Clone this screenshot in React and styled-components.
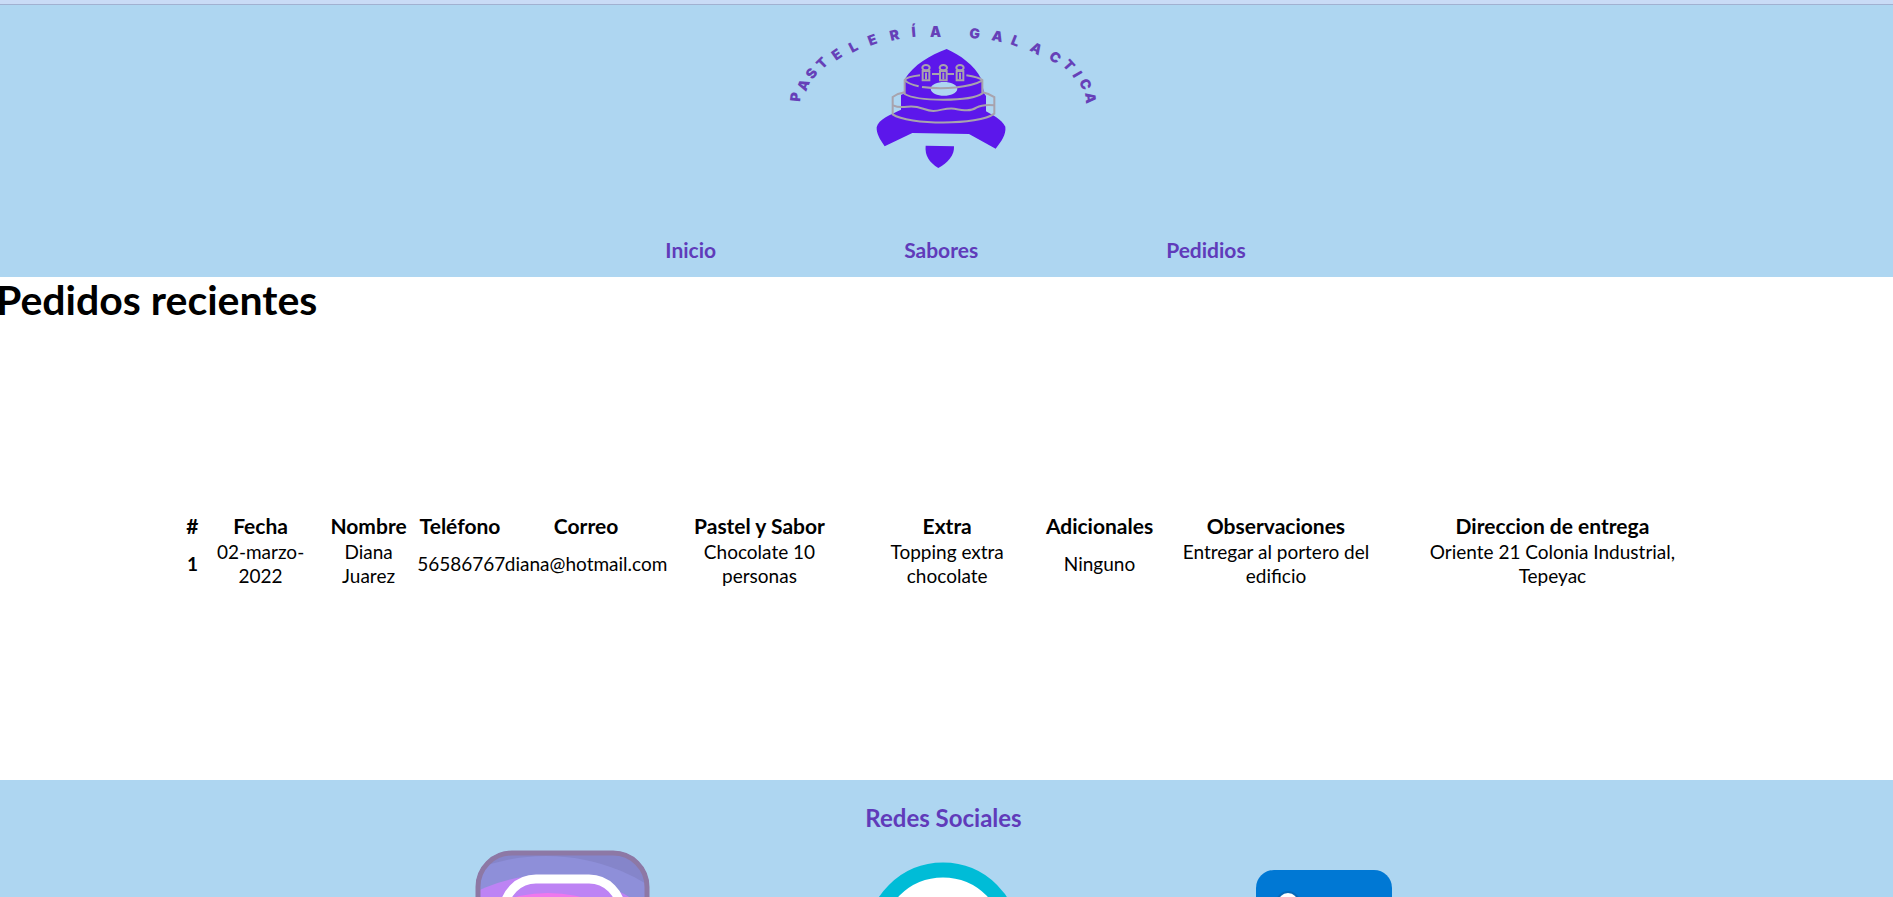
import React from "react";
import styled, { createGlobalStyle } from "styled-components";

const sky = "#aed6f1";
const violet = "#603bba";

const GlobalStyle = createGlobalStyle`
  body {
    margin: 0;
    background: #fff;
    color: #000;
    font-family: "Gill Sans MT", Lato, "Liberation Sans", sans-serif;
    font-size: 19px;
    line-height: 24px;
    overflow-x: hidden;
  }
`;

const TopStrip = styled.div`
  height: 4px;
  background: #c9dbf6;
  border-bottom: 1px solid #a1b1d1;
`;

const Header = styled.header`
  display: flex;
  flex-direction: column;
  align-items: center;
  background: ${sky};
`;

const LogoDrawing = styled.svg`
  display: block;
  width: 350px;
  height: 176px;
  margin-right: 4px;
`;

const ArchText = styled.text`
  fill: #6640b8;
  font: 900 14px Inter, "DejaVu Sans", sans-serif;
`;

const Nav = styled.nav`
  display: flex;
  justify-content: center;
  gap: 188px;
  padding: 57px 0 15px 18px;
`;

const NavLink = styled.a`
  color: ${violet};
  font-size: 21px;
  font-weight: 700;
  text-decoration: none;
`;

const PageTitle = styled.h1`
  margin: 0 0 0 -4px;
  font-size: 41px;
  line-height: 46px;
  font-weight: 700;
`;

const Main = styled.main`
  padding-bottom: 192px;
`;

const Orders = styled.table`
  width: 80.6%;
  margin: 191px auto 0;
  table-layout: fixed;
  border-spacing: 2px 0;
  text-align: center;
`;

const Column = styled.col`
  width: ${(p) => p.$share}%;
`;

const Cell = styled.td`
  padding: 0;
  white-space: pre-line;
`;

const HeadCell = styled.th`
  padding: 0 0 2px;
  font-size: 21px;
  white-space: nowrap;
`;

const RowNumber = styled.th`
  padding: 0;
`;

const Footer = styled.footer`
  background: ${sky};
  padding: 24px 0 32px;
`;

const FooterTitle = styled.h2`
  margin: 0 0 10px;
  padding-right: 6px;
  color: ${violet};
  font-size: 24px;
  line-height: 28px;
  text-align: center;
`;

const SocialRow = styled.div`
  display: flex;
  justify-content: center;
  gap: 189px;
  padding-right: 8px;
`;

const SocialLink = styled.a`
  display: block;
  width: 192px;
  height: 192px;
`;

const letters = [
  ["P", 26, 97, -84], ["A", 33, 85, -68], ["S", 42, 73, -56], ["T", 52, 63, -44],
  ["E", 67, 54, -35], ["L", 84, 46, -27], ["E", 103, 40, -20], ["R", 125, 35, -13],
  ["Í", 144, 32, -5], ["A", 165, 32, 0], ["G", 204, 33, 5], ["A", 227, 36, 12],
  ["L", 247, 41, 22], ["A", 266, 48, 30], ["C", 285, 57, 38], ["T", 299, 65, 48],
  ["I", 307, 74, 60], ["C", 315, 84, 70], ["A", 320, 97, 84],
];

// Each glyph turns about its own origin, so step back from its centre.
const placed = letters.map(([ch, x, y, deg]) => {
  const a = (deg * Math.PI) / 180;
  const half = ch === "I" || ch === "Í" ? 2 : 5;
  return {
    ch,
    deg,
    x: Math.round(x - half * Math.cos(a) - 5 * Math.sin(a)),
    y: Math.round(y - half * Math.sin(a) + 5 * Math.cos(a)),
  };
});

function Logo() {
  return (
    <LogoDrawing viewBox="0 5 350 176" role="img" aria-label="Pastelería Galáctica">
      <ArchText
        x={placed.map((p) => p.x).join(" ")}
        y={placed.map((p) => p.y).join(" ")}
        rotate={placed.map((p) => p.deg).join(" ")}
      >
        {placed.map((p) => p.ch).join("")}
      </ArchText>
      <g transform="scale(0.33333)">
        <path
          fill="#5c17eb"
          fillRule="evenodd"
          d="M530 147C570 165 612 194 634 237L642 280L648 288V334C668 346 694 357 706 380C709 404 694 424 677 446L597 402L427 399L344 439C329 417 319 401 320 382C325 357 363 344 393 329V285L404 280V238C432 193 480 166 530 147ZM482 266C484 294 560 294 562 266C560 239 484 239 482 266Z"
        />
        <path fill="#5c17eb" d="M467 437L552 439C554 466 533 489 505 504C478 487 464 467 467 437Z" />
        <g fill="none" stroke="#a8a3ad" strokeWidth="6">
          <path d="M450 226C426 229 409 233 404 240V282C440 304 600 306 637 280V240C626 232 608 229 589 226M486 222H510M530 222H552" />
          <path d="M405 241C416 252 428 255 446 259M456 261C520 269 600 263 638 241" />
          <path d="M404 277L384 282L368 291V343C415 375 625 377 673 341V291L655 282L638 277" />
          <path d="M369 316C386 324 398 322 413 320C450 315 462 333 490 333C516 331 528 323 553 326C580 331 603 335 619 323C634 315 655 314 673 316" />
          {[468, 520, 570].map((x) => (
            <g key={x}>
              <ellipse cx={x} cy="203" rx="11" ry="8" />
              <path d={`M${x - 10} 213H${x + 10}V241H${x - 10}Z`} />
              <path d={`M${x} 218V238`} />
            </g>
          ))}
        </g>
      </g>
    </LogoDrawing>
  );
}

function Instagram() {
  return (
    <svg width="192" height="192" viewBox="0 0 192 192" aria-hidden="true">
      <clipPath id="ig-shape">
        <rect x="10" y="9" width="173" height="174" rx="36" />
      </clipPath>
      <g clipPath="url(#ig-shape)">
        <rect width="192" height="192" fill="#8585ca" />
        <circle cx="80" cy="209" r="195" fill="#8e8fd9" />
        <circle cx="82" cy="195" r="162" fill="#bd83f4" />
        <circle cx="82" cy="192" r="141" fill="#ef78ed" />
      </g>
      <rect x="12" y="11" width="169" height="170" rx="34" fill="none" stroke="#8d78a5" strokeWidth="5" />
      <rect x="38" y="37" width="117" height="117" rx="32" fill="none" stroke="#fff" strokeWidth="9" />
      <circle cx="96" cy="96" r="27" fill="none" stroke="#fff" strokeWidth="9" />
      <circle cx="131" cy="62" r="7" fill="#fff" />
    </svg>
  );
}

function WhatsApp() {
  return (
    <svg width="192" height="192" viewBox="0 0 192 192" aria-hidden="true">
      <circle cx="96" cy="97" r="69" fill="#fff" stroke="#00bcd7" strokeWidth="15" />
      <path d="M96 72V122M71 97H121" stroke="#00bcd7" strokeWidth="12" />
    </svg>
  );
}

function LinkedIn() {
  return (
    <svg width="192" height="192" viewBox="0 0 192 192" aria-hidden="true">
      <rect x="28" y="28" width="136" height="136" rx="18" fill="#0078d4" />
      <circle cx="60" cy="61" r="12" fill="#0669b9" />
      <circle cx="60" cy="61" r="10" fill="#fff" />
      <path fill="#fff" d="M51 80H69V140H51ZM80 80H98V88C112 72 141 78 141 105V140H123V108C123 91 98 91 98 108V140H80Z" />
    </svg>
  );
}

const columns = [
  ["#", 0.9], ["Fecha", 7.9], ["Nombre", 6.2], ["Teléfono", 5.7], ["Correo", 10.8],
  ["Pastel y Sabor", 12], ["Extra", 12.7], ["Adicionales", 7.3],
  ["Observaciones", 15.9], ["Direccion de entrega", 20.6],
];

const order = [
  "02-marzo-\n2022", "Diana\nJuarez", "56586767", "diana@hotmail.com",
  "Chocolate 10\npersonas", "Topping extra\nchocolate", "Ninguno",
  "Entregar al portero del\nedificio", "Oriente 21 Colonia Industrial,\nTepeyac",
];

export default function App() {
  return (
    <>
      <GlobalStyle />
      <TopStrip />
      <Header>
        <Logo />
        <Nav>
          <NavLink href="#inicio">Inicio</NavLink>
          <NavLink href="#sabores">Sabores</NavLink>
          <NavLink href="#pedidos">Pedidios</NavLink>
        </Nav>
      </Header>
      <Main>
        <PageTitle>Pedidos recientes</PageTitle>
        <Orders>
          <colgroup>
            {columns.map(([name, share]) => <Column key={name} $share={share} />)}
          </colgroup>
          <thead>
            <tr>
              {columns.map(([name]) => <HeadCell key={name} scope="col">{name}</HeadCell>)}
            </tr>
          </thead>
          <tbody>
            <tr>
              <RowNumber scope="row">1</RowNumber>
              {order.map((text) => <Cell key={text}>{text}</Cell>)}
            </tr>
          </tbody>
        </Orders>
      </Main>
      <Footer>
        <FooterTitle>Redes Sociales</FooterTitle>
        <SocialRow>
          <SocialLink href="#instagram" aria-label="Instagram"><Instagram /></SocialLink>
          <SocialLink href="#whatsapp" aria-label="WhatsApp"><WhatsApp /></SocialLink>
          <SocialLink href="#linkedin" aria-label="LinkedIn"><LinkedIn /></SocialLink>
        </SocialRow>
      </Footer>
    </>
  );
}
